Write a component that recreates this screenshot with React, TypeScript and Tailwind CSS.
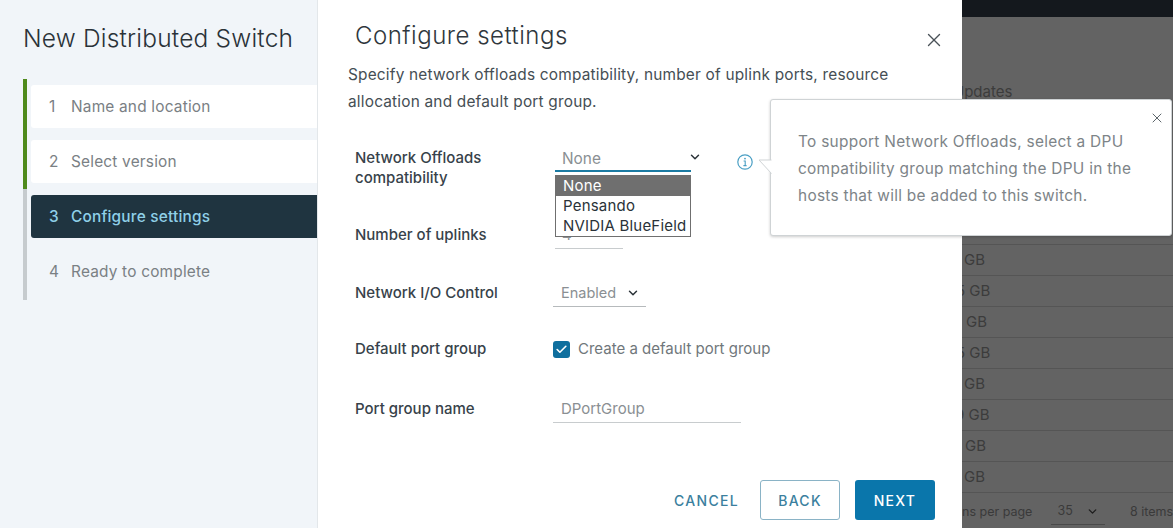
import React from 'react';
import { Check, ChevronDown, X } from 'lucide-react';

const STEPS = [
  { n: 1, label: 'Name and location', state: 'done' },
  { n: 2, label: 'Select version', state: 'done' },
  { n: 3, label: 'Configure settings', state: 'active' },
  { n: 4, label: 'Ready to complete', state: 'todo' },
];

// the dialog cuts off the left of this column, so each row starts at its own offset
const GB_ROWS = [
  { text: 'GB', cls: 'ml-[2px]' },
  { text: '5 GB', cls: 'ml-[-6px]' },
  { text: 'GB', cls: 'ml-[4px]' },
  { text: '5 GB', cls: 'ml-[-6px]' },
  { text: 'GB', cls: 'ml-[2px]' },
  { text: '9 GB', cls: 'ml-[-7px]' },
  { text: 'GB', cls: 'ml-[3px]' },
  { text: 'GB', cls: 'ml-[2px]' },
];

const FONT = "font-['Inter','Liberation_Sans',sans-serif]";

const Label: React.FC<{ children: React.ReactNode }> = ({ children }) => (
  <div className="w-[198px] shrink-0 text-[15px] leading-[20px] font-medium text-[#37424a]">{children}</div>
);

const App: React.FC = () => {
  return (
    <div className={`relative flex h-[528px] w-[1173px] overflow-hidden bg-white ${FONT}`}>
      {/* wizard steps */}
      <aside className="w-[318px] shrink-0 border-r border-[#e3e7ea] bg-[#f1f5f9] pl-[23px]">
        <h1 className="mt-[22px] text-[24.5px] leading-[32px] font-light tracking-[0.2px] whitespace-nowrap text-[#2a3238]">
          New Distributed Switch
        </h1>
        <div className="relative mt-[25px] flex h-[221px] flex-col">
          <div className="absolute top-0 left-0 h-[110px] w-[4px] bg-[#4f8a1c]" />
          <div className="absolute top-[110px] left-0 h-[111px] w-[4px] bg-[#c6cbce]" />
          <div className="flex flex-col gap-[12px] pt-[6px] pl-[8px]">
            {STEPS.map(step => (
              <div
                key={step.n}
                className={`flex h-[43px] items-center rounded-l-[3px] pt-[1px] pl-[18px] text-[15.4px] tracking-[0.2px] ${
                  step.state === 'active'
                    ? 'bg-[#1f3440] font-medium text-[#8fd0e8]'
                    : step.state === 'done'
                      ? 'bg-white text-[#7a8084]'
                      : 'text-[#7a8084]'
                }`}
              >
                <span className="w-[22px]">{step.n}</span>
                <span>{step.label}</span>
              </div>
            ))}
          </div>
        </div>
      </aside>

      {/* dialog body */}
      <main className="flex w-[644px] shrink-0 flex-col bg-white">
        <div className="flex items-start justify-between pt-[19px] pr-[17px] pl-[37px]">
          <h2 className="text-[24px] leading-[34px] font-light tracking-[0.5px] text-[#2f373d]">Configure settings</h2>
          <X className="mt-[10px] size-[22px] text-[#4a5258]" strokeWidth={1.5} />
        </div>
        <p className="mt-[8px] w-[600px] pl-[30px] text-[15.4px] leading-[27px] tracking-[0.2px] whitespace-pre-line text-[#454e54]">
          {'Specify network offloads compatibility, number of uplink ports, resource\nallocation and default port group.'}
        </p>

        <div className="mt-[33px] flex flex-col pl-[37px]">
          <div className="flex h-[40px]">
            <Label>Network Offloads compatibility</Label>
            <div className="ml-[2px] flex h-[24px] w-[136px] flex-col">
              <div className="mt-[1px] ml-[7px] text-[15.4px] leading-[20px] text-[#8a8f93]">None</div>
              <div className="mt-auto h-[2px] shrink-0 bg-[#1b7ba3]" />
            </div>
            <ChevronDown className="mt-[2px] ml-[-3px] size-[14px] text-[#2a3238]" strokeWidth={2.5} />
            <svg className="mt-[6px] ml-[35px] size-[16px] text-[#4a9fc4]" viewBox="0 0 16 16" fill="none" stroke="currentColor">
              <circle cx="8" cy="8" r="7.2" strokeWidth="1.2" />
              <circle cx="8" cy="4.6" r="0.9" fill="currentColor" stroke="none" />
              <path d="M6.6 7h1.6v4.4M6.4 11.6h3.2" strokeWidth="1.1" />
            </svg>
          </div>

          <div className="mt-[37px] flex h-[40px]">
            <Label>Number of uplinks</Label>
            <div className="ml-[2px] h-[24px] w-[68px] border-b border-[#c8ccce] pl-[7px] text-[15px] leading-[20px] text-[#8a8f93]">
              4
            </div>
          </div>

          <div className="mt-[18px] flex h-[40px]">
            <Label>Network I/O Control</Label>
            <div className="flex h-[24px] w-[93px] items-center justify-between border-b border-[#b6babc] pr-[6px] pb-[3px] pl-[8px] text-[14.5px] text-[#8a8f93]">
              Enabled
              <ChevronDown className="size-[14px] text-[#2a3238]" strokeWidth={2.5} />
            </div>
          </div>

          <div className="mt-[16px] flex h-[40px]">
            <Label>Default port group</Label>
            <div className="mt-[1px] flex h-[18px] items-center gap-[8px] text-[15px] text-[#70777b]">
              <span className="flex size-[17px] items-center justify-center rounded-[3px] bg-[#0f6f9e]">
                <Check className="size-[13px] text-white" strokeWidth={3} />
              </span>
              <span className="pt-[1px]">Create a default port group</span>
            </div>
          </div>

          <div className="mt-[20px] flex h-[40px]">
            <Label>Port group name</Label>
            <div className="h-[24px] w-[188px] border-b border-[#c8ccce] pl-[8px] text-[15px] leading-[20px] text-[#8a8f93]">
              DPortGroup
            </div>
          </div>
        </div>

        <div className="mt-[41px] flex items-center justify-end gap-[15px] pr-[27px] text-[14px] font-medium tracking-[1.3px]">
          <button className="mr-[6px] text-[#3b7f9e]">CANCEL</button>
          <button className="h-[40px] w-[80px] rounded-[3px] border border-[#8ab3c6] bg-white text-[#3b7f9e]">BACK</button>
          <button className="h-[40px] w-[80px] rounded-[3px] bg-[#0a76ab] text-white">NEXT</button>
        </div>
      </main>

      {/* dimmed page behind the dialog */}
      <div className="flex min-w-0 flex-1 flex-col overflow-hidden bg-[#636363] text-[15px] text-[#3c3c3c]">
        <div className="h-[17px] shrink-0 bg-[#14181d]" />
        <div className="mt-[65px] ml-[-9px] h-[20px] leading-[20px] whitespace-nowrap">Updates</div>
        <div className="mt-[142px] flex flex-col border-t border-[#555555]">
          {GB_ROWS.map((row, i) => (
            <div key={i} className="flex h-[31px] items-center border-b border-[#555555]">
              <span className={`whitespace-nowrap ${row.cls}`}>{row.text}</span>
            </div>
          ))}
        </div>
        <div className="mt-[3px] flex h-[33px] items-center text-[12.5px] whitespace-nowrap text-[#3a3a3a]">
          <span className="w-[92px]">ns per page</span>
          <span className="flex h-[26px] w-[56px] items-center justify-between border-b border-[#4a4a4a] pr-[6px] pl-[7px]">
            35
            <ChevronDown className="size-[13px] text-[#1d1d1d]" strokeWidth={2.5} />
          </span>
          <span className="ml-[25px]">8 items</span>
        </div>
      </div>

      {/* native select options */}
      <div className="absolute top-[175px] left-[555px] w-[136px] border border-[#6f6f6f] bg-white text-[15px] leading-[20px] tracking-[0.2px] text-[#2a3238]">
        <div className="bg-[#6f6f6f] pl-[7px] text-white">None</div>
        <div className="pl-[7px]">Pensando</div>
        <div className="pl-[7px] whitespace-nowrap">NVIDIA BlueField</div>
      </div>

      {/* signpost popover */}
      <div className="absolute top-[99px] left-[770px] h-[137px] w-[402px] rounded-[3px] border border-[#cfd3d5] bg-white pt-[28px] pl-[27px] text-[15.4px] leading-[27px] tracking-[0.3px] text-[#7d8488] shadow-[0_1px_3px_rgba(0,0,0,0.2)]">
        <X className="absolute top-[10px] right-[6px] size-[16px] text-[#5d666b]" strokeWidth={1.5} />
        <p className="whitespace-pre-line">
          {'To support Network Offloads, select a DPU\ncompatibility group matching the DPU in the\nhosts that will be added to this switch.'}
        </p>
        <svg className="absolute top-[59px] left-[-13px]" width="14" height="18" viewBox="0 0 14 18">
          <path d="M14 1H1l12 13v3z" fill="#fff" />
          <path d="M13.5 1H1l12.5 13.5" fill="none" stroke="#cfd3d5" />
        </svg>
      </div>
    </div>
  );
};

export default App;
